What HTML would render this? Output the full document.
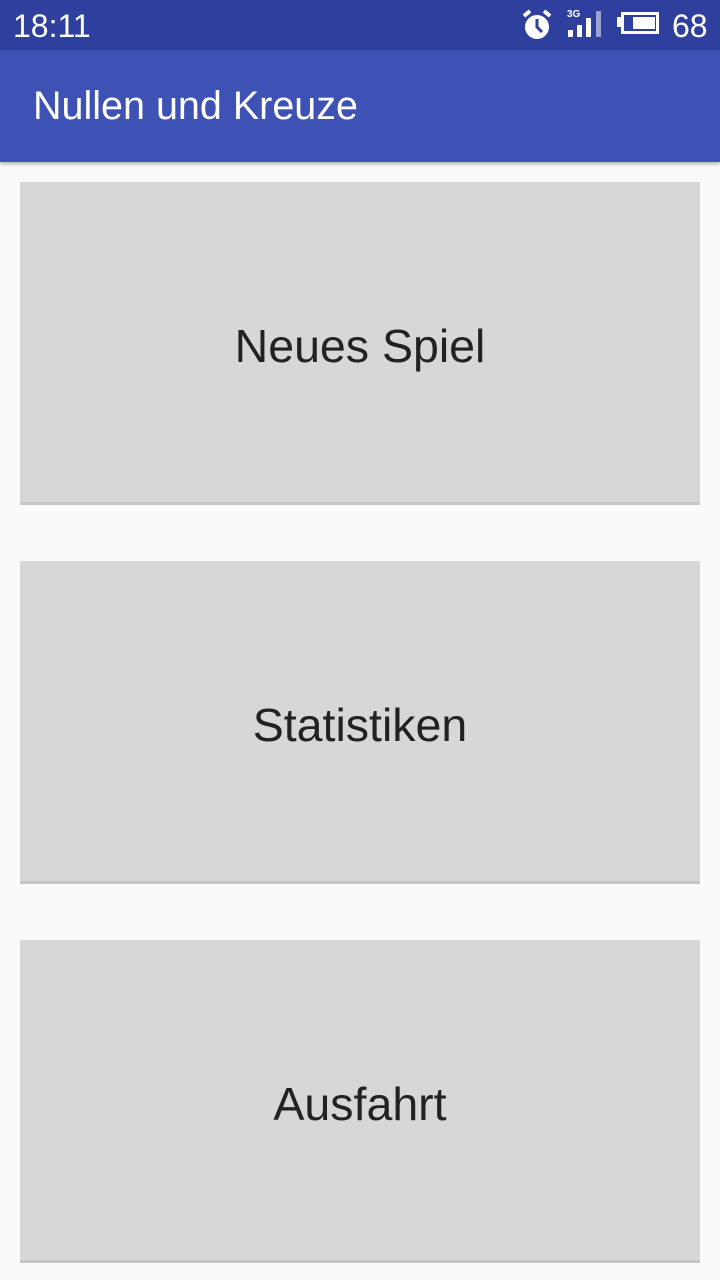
<!DOCTYPE html>
<html><head><meta charset="utf-8"><style>
body{margin:0;width:720px;height:1280px;background:#fafafa;font-family:"Liberation Sans",sans-serif;position:relative;overflow:hidden}
.sb{position:absolute;top:0;left:0;width:720px;height:50px;background:#2f3f9e;color:#fff}
.ab{position:absolute;top:50px;left:0;width:720px;height:112px;background:#3e51b5;box-shadow:0 2px 4px rgba(0,0,0,.3)}
.ab span{position:absolute;left:33px;top:34px;font-size:39.5px;color:#fff}
.btn{position:absolute;left:20px;width:680px;height:323px;padding-top:8px;background:#d6d7d7;border-bottom:3px solid #c6c6c6;box-sizing:border-box;display:flex;align-items:center;justify-content:center;font-size:46.5px;color:#222}
</style></head><body>
<div class="sb">
<span style="position:absolute;left:13px;top:8px;font-size:32px">18:11</span>
<svg style="position:absolute;left:520px;top:8px" width="34" height="34" viewBox="0 0 34 34"><circle cx="17" cy="19" r="12" fill="#fff"/><path d="M4 8 L10 3 M30 8 L24 3" stroke="#fff" stroke-width="4"/><path d="M17 11 V19 L22 24" stroke="#2f3f9e" stroke-width="3" fill="none"/></svg>
<span style="position:absolute;left:567px;top:9px;font-size:10px;font-weight:bold">3G</span>
<div style="position:absolute;left:568px;top:30px;width:5px;height:7px;background:#fff"></div>
<div style="position:absolute;left:577px;top:25px;width:5px;height:12px;background:#fff"></div>
<div style="position:absolute;left:586px;top:18px;width:5px;height:19px;background:#fff"></div>
<div style="position:absolute;left:596px;top:11px;width:5px;height:26px;background:#9aa3d6"></div>
<div style="position:absolute;left:617px;top:17px;width:4px;height:10px;background:#fff"></div>
<div style="position:absolute;left:621px;top:12px;width:38px;height:22px;border:3px solid #fff;box-sizing:border-box"></div>
<div style="position:absolute;left:633px;top:17px;width:22px;height:12px;background:#fff"></div>
<span style="position:absolute;left:672px;top:8px;font-size:32px">68</span>
</div>
<div class="ab"><span>Nullen und Kreuze</span></div>
<div class="btn" style="top:182px">Neues Spiel</div>
<div class="btn" style="top:561px">Statistiken</div>
<div class="btn" style="top:940px">Ausfahrt</div>
</body></html>
